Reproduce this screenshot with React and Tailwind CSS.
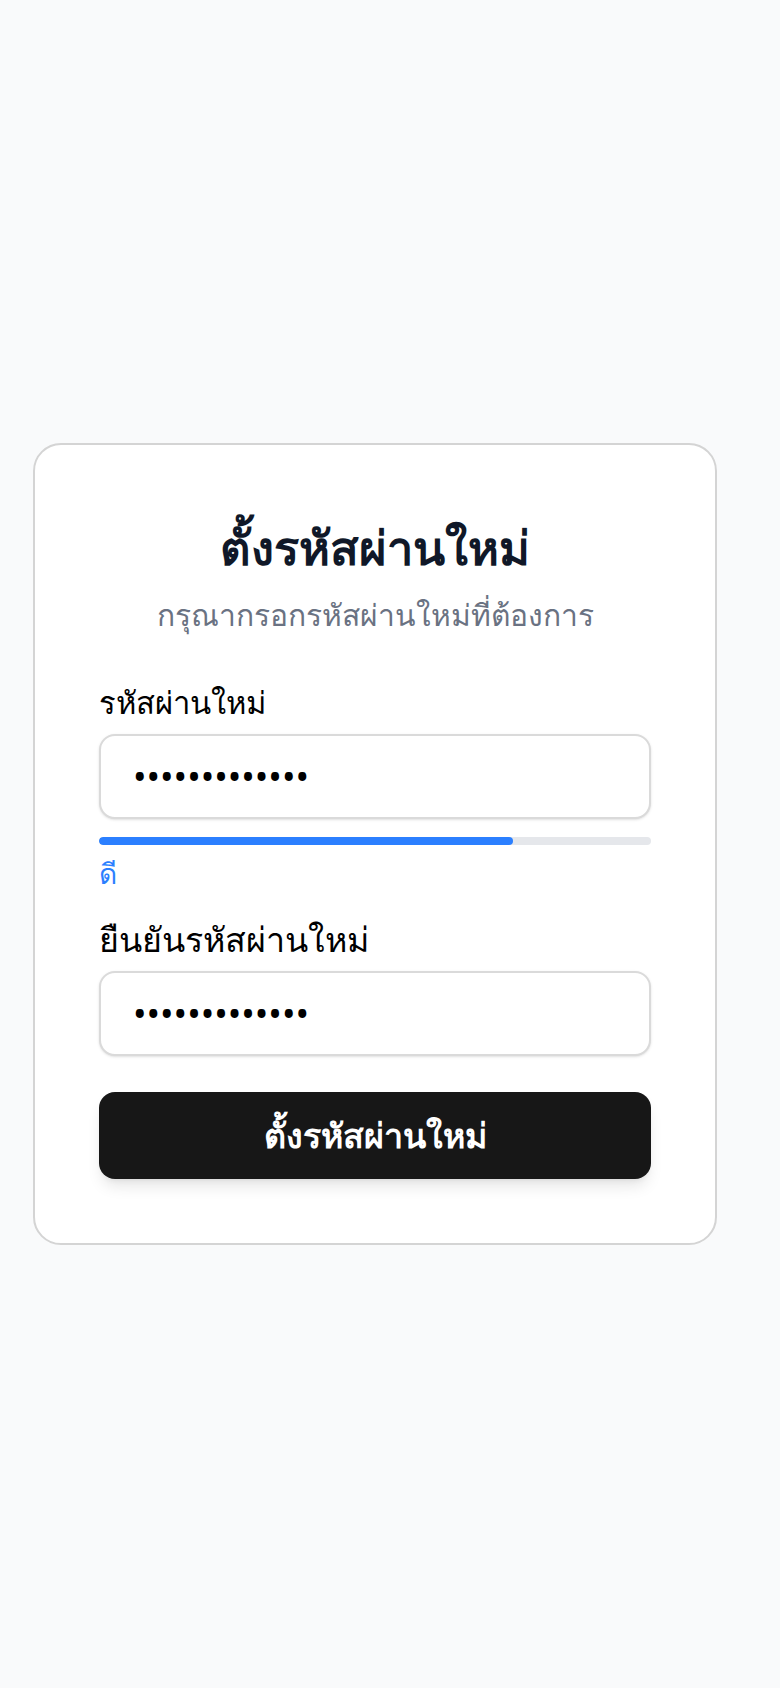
import React, { useState } from "react";

const PasswordField = ({ label, value, onChange, labelSize, className = "" }) => (
  <div className={className}>
    <label className={`block ${labelSize} leading-[48px] font-medium text-black`}>
      {label}
    </label>
    <input
      type="password"
      value={value}
      onChange={(e) => onChange(e.target.value)}
      className="mt-2 w-full h-[85px] bg-white border-2 border-[#dadada] rounded-2xl px-8 text-[36px] text-black shadow-sm outline-none"
    />
  </div>
);

export default function App() {
  const [password, setPassword] = useState("Password1234!");
  const [confirm, setConfirm] = useState("Password1234!");
  const strength = 75;

  return (
    <div className="bg-gray-50 font-['Noto_Sans',sans-serif]">
      <div className="min-h-screen flex items-center px-[33px]">
        <div className="w-[684px] bg-white border-2 border-neutral-300 rounded-[28px] p-16">
          <h1 className="pt-1.5 text-center text-[47px] leading-[64px] font-bold text-gray-900">
            ตั้งรหัสผ่านใหม่
          </h1>
          <p className="mt-3 text-center text-[30px] leading-[48px] text-gray-500">
            กรุณากรอกรหัสผ่านใหม่ที่ต้องการ
          </p>

          <form className="mt-[39px]" onSubmit={(e) => e.preventDefault()}>
            <PasswordField
              label="รหัสผ่านใหม่"
              labelSize="text-[31px]"
              value={password}
              onChange={setPassword}
            />

            <div className="mt-[18px] h-2 w-full rounded-full bg-gray-200 overflow-hidden">
              <div
                className="h-full rounded-full bg-blue-500"
                style={{ width: `${strength}%` }}
              />
            </div>
            <div className="mt-2 text-[28px] leading-[40px] text-blue-500">ดี</div>

            <PasswordField
              label="ยืนยันรหัสผ่านใหม่"
              labelSize="text-[34px]"
              value={confirm}
              onChange={setConfirm}
              className="mt-[22px]"
            />

            <button
              type="submit"
              className="mt-9 w-full h-[87px] rounded-2xl bg-neutral-900 text-white text-[34px] font-semibold shadow-lg"
            >
              ตั้งรหัสผ่านใหม่
            </button>
          </form>
        </div>
      </div>
    </div>
  );
}
